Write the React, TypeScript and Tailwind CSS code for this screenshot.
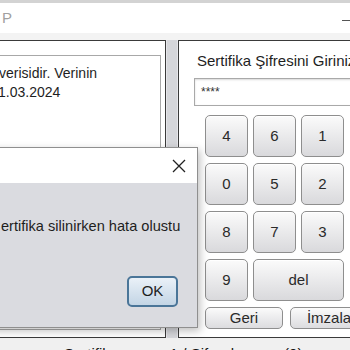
import React from "react";

const KeyButton = ({ label, wide }: { label: string; wide?: boolean }) => {
  return (
    <div
      className={`${wide ? "col-span-2" : ""} h-[42px] flex items-center justify-center rounded-[5px] border border-[#8e8e8e] bg-gradient-to-b from-[#fbfbfb] to-[#d9d9dc] text-[15px] text-[#2a2a2a] shadow-[inset_0_1px_0_#ffffff]`}
    >
      {label}
    </div>
  );
};

const App = () => {
  const keys = ["4", "6", "1", "0", "5", "2", "8", "7", "3", "9"];
  return (
    <div
      className="relative w-[350px] h-[350px] overflow-hidden bg-[#f0f0f0] text-[#1e1e1e]"
      style={{ fontFamily: '"Liberation Sans", Arial, sans-serif' }}
    >
      <div className="h-[3px] bg-[#d3d3d3]" />
      <div className="h-[30px] bg-white flex items-center justify-between">
        <span className="ml-[2px] text-[15px] text-[#a0a0a0]">P</span>
        <span className="w-[8px] h-px bg-[#555] mt-[4px]" />
      </div>
      <div className="h-[7px] bg-[#f3f3f3]" />

      <div className="flex h-[298px]">
        {/* left panel */}
        <div className="w-[166px] shrink-0 bg-white border-y border-r border-[#3a3a3a] pt-[14px] pr-[4px] pb-[7px]">
          <div className="h-full border border-l-0 border-[#a8a8a8] pt-[8px] text-[14px] leading-[19px] whitespace-nowrap">
            <div className="ml-[-1px]">verisidir. Verinin</div>
            <div className="ml-[-2px]">1.03.2024</div>
          </div>
        </div>

        {/* divider */}
        <div className="w-[12px] shrink-0 bg-[#d5d6da] border-x border-[#e6e6ea]" />

        {/* right panel */}
        <div className="flex-1 min-w-[200px] bg-white border-y border-l border-[#3a3a3a] pl-[15px] pt-[11px] whitespace-nowrap">
          <div className="ml-[3px] text-[15px] leading-[17px]">Sertifika Şifresini Giriniz</div>
          <div className="mt-[9px] h-[28px] w-[200px] border border-[#a9a9a9] shadow-[inset_0_1px_2px_#d8d8d8] flex items-center pl-[6px] text-[12px] text-[#333]">
            ****
          </div>
          <div className="ml-[11px] mt-[9px] grid grid-cols-[43px_43px_43px] gap-x-[5px] gap-y-[6px]">
            {keys.map((k) => (
              <KeyButton key={k} label={k} />
            ))}
            <KeyButton label="del" wide />
          </div>
          <div className="ml-[11px] mt-[6px] flex gap-[7px]">
            <div className="w-[78px] h-[22px] flex items-center justify-center rounded-[5px] border border-[#8e8e8e] bg-gradient-to-b from-[#fbfbfb] to-[#dcdcdf] text-[15px] text-[#2a2a2a]">
              Geri
            </div>
            <div className="w-[78px] h-[22px] flex items-center justify-center rounded-[5px] border border-[#8e8e8e] bg-gradient-to-b from-[#fbfbfb] to-[#dcdcdf] text-[15px] text-[#2a2a2a]">
              İmzala
            </div>
          </div>
        </div>
      </div>

      {/* status text, clipped at bottom */}
      <div className="ml-[64px] mt-[7px] text-[15px] leading-[17px] whitespace-nowrap text-[#111]">
        Sertifika sayısı: 1 / Şifre deneme (0)
      </div>

      {/* error dialog */}
      <div className="absolute left-[-10px] top-[147px] w-[208px] h-[181px] flex flex-col border border-[#8f8f8f] bg-[#dadbe0] shadow-[2px_3px_8px_rgba(0,0,0,0.25)]">
        <div className="h-[35px] shrink-0 bg-white flex items-center justify-end pr-[11px]">
          <svg width="14" height="14" viewBox="0 0 14 14">
            <path d="M1 1 L13 13 M13 1 L1 13" stroke="#222" strokeWidth="1.3" fill="none" />
          </svg>
        </div>
        <div className="flex-1 flex flex-col">
          <div className="mt-[34px] ml-[10px] text-[14.6px] leading-[18px] whitespace-nowrap">
            ertifika silinirken hata olustu
          </div>
          <div className="self-end mr-[19px] mt-[41px] w-[51px] h-[31px] flex items-center justify-center rounded-[5px] border-2 border-[#4a7598] bg-gradient-to-b from-[#eaf1f8] to-[#c3d5e5] text-[15px] text-[#1e1e1e]">
            OK
          </div>
        </div>
      </div>
    </div>
  );
};

export default App;
